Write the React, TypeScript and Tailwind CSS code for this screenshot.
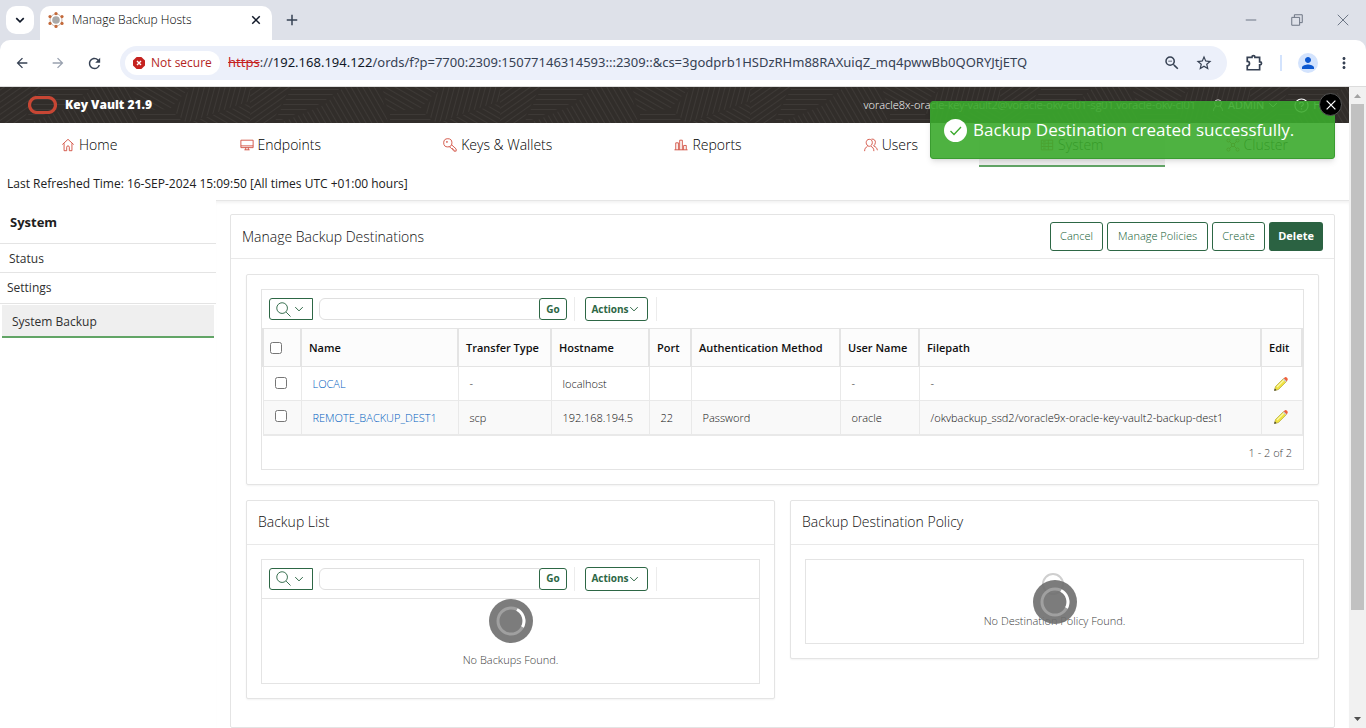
import type { ReactNode } from 'react';
import { MdArrowBack, MdArrowForward, MdRefresh, MdZoomOut, MdStarBorder, MdPerson, MdMoreVert } from 'react-icons/md';

interface Destination {
  name: string;
  type: string;
  host: string;
  port: string;
  auth: string;
  user: string;
  path: string;
}

const DESTINATIONS: Destination[] = [
  { name: 'LOCAL', type: '-', host: 'localhost', port: '', auth: '', user: '-', path: '-' },
  {
    name: 'REMOTE_BACKUP_DEST1',
    type: 'scp',
    host: '192.168.194.5',
    port: '22',
    auth: 'Password',
    user: 'oracle',
    path: '/okvbackup_ssd2/voracle9x-oracle-key-vault2-backup-dest1',
  },
];

const HEADERS = ['Name', 'Transfer Type', 'Hostname', 'Port', 'Authentication Method', 'User Name', 'Filepath', 'Edit'];

function Line({ size = 16, className = '', children }: { size?: number; className?: string; children: ReactNode }) {
  return (
    <svg width={size} height={size} viewBox="0 0 16 16" fill="none" stroke="currentColor" className={`shrink-0 ${className}`} aria-hidden="true">
      {children}
    </svg>
  );
}

const icons = {
  home: <path d="M1.500 7.500 8 1.500l6.500 6M3.500 6v8.500h3v-4a1.500 1.500 0 0 1 3 0v4h3V6" />,
  endpoints: <path d="M1 2.500h14v8.500H1zM1 9h14M6.500 11v2.500M9.500 11v2.500M5 13.500h6" />,
  keys: (
    <>
      <circle cx="5.500" cy="5.500" r="4.700" />
      <circle cx="4.500" cy="4.500" r=".6" />
      <path d="m9.500 7.500 5.500 5v2.500h-2.500v-1.500h-1.500v-1.500h-1.500l-2.500-2.500" />
    </>
  ),
  reports: <path d="M.5 13.500h15M2 13.500v-8h3v8M6.500 13.500v-11h3v11M11 13.500v-5h3v5" />,
  users: (
    <>
      <path d="M6 1.500c-2.200 0-3.500 1.700-3.500 3.700S4 9.500 6 9.500s3.500-2 3.500-4.300S8.200 1.500 6 1.500ZM.7 15c0-3 1.300-4.300 3.300-5.500M8 9.500c2 1 3.300 2.500 3.300 5.500" />
      <path d="M8.500 1.300c3-.5 4.800 1.500 4.500 4-.2 1.700-.9 2.900-2 3.700 2.500 1 4 2.700 4.300 5" />
    </>
  ),
  system: (
    <>
      <path d="M1.500 2.500h13v11h-13zM1.500 6h13M1.500 9.700h13M9.500 2.500v11" />
      <path d="M3.500 4.300h3M3.500 7.900h3M3.500 11.600h3" />
    </>
  ),
  cluster: (
    <>
      <circle cx="8" cy="8" r="2" />
      <circle cx="2.800" cy="2.800" r="1.800" />
      <circle cx="13.200" cy="2.800" r="1.800" />
      <circle cx="2.800" cy="13.200" r="1.800" />
      <circle cx="13.200" cy="13.200" r="1.800" />
      <path d="m4 4 2.600 2.600M12 4 9.400 6.600M4 12l2.600-2.600M12 12 9.400 9.400" />
    </>
  ),
};

const NAV = [
  { label: 'Home', icon: icons.home },
  { label: 'Endpoints', icon: icons.endpoints },
  { label: 'Keys & Wallets', icon: icons.keys },
  { label: 'Reports', icon: icons.reports },
  { label: 'Users', icon: icons.users },
  { label: 'System', icon: icons.system, active: true },
  { label: 'Cluster', icon: icons.cluster },
];

function Chevron() {
  return (
    <Line size={10}>
      <path d="m2 5 6 6 6-6" strokeWidth="1.600" />
    </Line>
  );
}

function Favicon() {
  return (
    <svg width="16" height="16" viewBox="0 0 16 16" className="shrink-0" aria-hidden="true">
      <circle cx="8" cy="8" r="6" fill="none" stroke="#c9b8ae" strokeWidth="1" />
      <circle cx="8" cy="8" r="3.800" fill="#a9a9a9" />
      {[[8, 1.6], [2, 4.6], [14, 4.6], [2, 11.4], [14, 11.4], [8, 14.4]].map(([x, y]) => (
        <circle key={`${x}-${y}`} cx={x} cy={y} r="1.600" fill="#c4693a" />
      ))}
    </svg>
  );
}

function BrowserChrome() {
  return (
    <div className="shrink-0 bg-[#dee1e9]">
      <div className="flex h-10 items-end">
        <button className="mb-[6px] ml-[6px] flex size-7 items-center justify-center rounded-[10px] bg-white text-gray-900" aria-label="Search tabs">
          <Line size={10}><path d="m2 5 6 6 6-6" strokeWidth="2.600" /></Line>
        </button>
        <div className="ml-[6px] flex h-[34px] w-[232px] items-center rounded-t-[10px] bg-white pb-[6px] pl-2">
          <Favicon />
          <span className="ml-2 grow text-xs font-light text-black">Manage Backup Hosts</span>
          <button className="mr-[10px] text-gray-900" aria-label="Close tab">
            <Line size={12}><path d="m3 3 10 10M13 3 3 13" strokeWidth="2" /></Line>
          </button>
        </div>
        <button className="mb-[14px] ml-[14px] text-gray-700" aria-label="New tab">
          <Line size={12}><path d="M8 1v14M1 8h14" strokeWidth="2" /></Line>
        </button>
        <div className="mb-[14px] ml-auto flex items-center gap-[34px] pr-[17px] text-gray-500">
          <button aria-label="Minimize"><Line size={12}><path d="M1 8h14" strokeWidth="1.300" /></Line></button>
          <button aria-label="Restore"><Line size={12}><path d="M1 4.500h10.500V15H1zM4.500 4.500V1H15v10.500h-3.500" strokeWidth="1.300" /></Line></button>
          <button aria-label="Close"><Line size={12}><path d="m1 1 14 14M15 1 1 15" strokeWidth="1.300" /></Line></button>
        </div>
      </div>
      <div className="flex h-[46px] items-center rounded-t-[10px] bg-white pl-[14px] text-gray-700">
        <button aria-label="Back"><MdArrowBack size={16} /></button>
        <button className="ml-5 text-gray-400" aria-label="Forward"><MdArrowForward size={16} /></button>
        <button className="ml-5" aria-label="Reload"><MdRefresh size={17} /></button>
        <div className="ml-[17px] flex h-[34px] grow items-center rounded-full bg-[#ecf0fa] pl-[5px] pr-[14px]">
          <button className="flex h-6 w-[95px] shrink-0 items-center gap-[6px] rounded-full bg-white pl-2 text-xs text-[#b3261e]">
            <svg width="12" height="12" viewBox="0 0 12 12" aria-hidden="true">
              <path d="M3.600 0h4.800L12 3.600v4.800L8.400 12H3.600L0 8.400V3.600z" fill="#c5221f" />
              <path d="m4 4 4 4M8 4 4 8" stroke="#fff" strokeWidth="1.400" />
            </svg>
            Not secure
          </button>
          <span className="ml-2 grow whitespace-nowrap font-['Noto_Sans',sans-serif] text-[13px] text-gray-700">
            <span className="text-[#c5221f] line-through">https</span>://
            <span className="text-gray-900">192.168.194.122</span>
            /ords/f?p=7700:2309:15077146314593:::2309::&amp;cs=3godprb1HSDzRHm88RAXuiqZ_mq4pwwBb0QORYJtjETQ
          </span>
          <button aria-label="Zoom"><MdZoomOut size={18} /></button>
          <button className="ml-[14px]" aria-label="Bookmark"><MdStarBorder size={18} /></button>
        </div>
        <button className="ml-[18px]" aria-label="Extensions">
          <Line size={18}>
            <path d="M2 3h4.200V2.700a1.300 1.300 0 0 1 2.600 0V3H13v4h.4a1.300 1.300 0 0 1 0 2.600H13V14H2v-3.500a2 2 0 0 0 0-4z" strokeWidth="1.500" />
          </Line>
        </button>
        <span className="ml-[17px] h-4 w-[2px] bg-[#d3e3fd]" />
        <button className="ml-4 flex size-5 items-center justify-center rounded-full bg-[#d3e3fd] text-[#0b57d0]" aria-label="Profile">
          <MdPerson size={18} />
        </button>
        <button className="ml-[17px] mr-[13px]" aria-label="Menu"><MdMoreVert size={18} /></button>
      </div>
    </div>
  );
}

// Hatched patches that repeat along the title bar
function Hatching() {
  return (
    <svg className="absolute inset-0 size-full" aria-hidden="true">
      <defs>
        {[0, 30, 60, 105, 145].map(angle => (
          <pattern key={angle} id={`hatch-${angle}`} width="5" height="5" patternUnits="userSpaceOnUse" patternTransform={`rotate(${angle})`}>
            <path d="M0 2.500h5" stroke="#3d3936" strokeWidth="1" />
          </pattern>
        ))}
        <pattern id="patches" width="250" height="36" patternUnits="userSpaceOnUse">
          <path d="M0 0h40l-18 36H0z" fill="url(#hatch-145)" />
          <path d="M42 0h50L72 16 24 36z" fill="url(#hatch-0)" />
          <path d="M94 0h36l8 36H30l44-18z" fill="url(#hatch-60)" />
          <path d="M132 0h58l-20 22-32 2z" fill="url(#hatch-30)" />
          <path d="m140 26 32-2 12 12h-44z" fill="url(#hatch-0)" />
          <path d="M192 0h58v14l-64 22-13-13z" fill="url(#hatch-105)" />
          <path d="M250 16v20h-62z" fill="url(#hatch-30)" />
        </pattern>
      </defs>
      <rect width="100%" height="100%" fill="url(#patches)" />
    </svg>
  );
}

function TitleBar() {
  return (
    <header className="relative h-9 bg-[#312d2a] text-white">
      <Hatching />
      <div className="relative flex h-full items-center pl-7 pr-3">
        <svg width="29" height="18" viewBox="0 0 29 18" aria-hidden="true">
          <rect x="1.500" y="1.500" width="26" height="15" rx="7.500" fill="none" stroke="#c74634" strokeWidth="3.200" />
        </svg>
        <span className="ml-2 text-xs font-extrabold">Key Vault 21.9</span>
        <span className="ml-auto text-[11px] font-light">voracle8x-oracle-key-vault2@voracle-okv-cl01-sg01.voracle-okv-cl01</span>
        <button className="ml-4 flex items-center gap-1 text-[11px]">
          <Line size={12}>
            <circle cx="8" cy="5.500" r="4.500" />
            <path d="M2 16c0-3 1-4.500 3.500-6.500M14 16c0-3-1-4.500-3.500-6.500" />
          </Line>
          ADMIN
          <Chevron />
        </button>
        <button className="ml-4 flex items-center gap-1 text-[11px]">
          <Line size={15}>
            <circle cx="8" cy="8" r="7" strokeWidth="1.200" />
            <path d="M6 6.500a2 2 0 1 1 2.800 1.700c-.6.300-.8.600-.8 1.300M8 11v1.300" strokeWidth="1.200" />
          </Line>
          Help
        </button>
      </div>
    </header>
  );
}

function SearchBar() {
  return (
    <div className="flex h-[38px] items-center pl-[7px]">
      <button className="flex h-[22px] w-11 items-center justify-center gap-[3px] rounded-l-[3px] border border-[#2d6745] pr-[3px] text-[#2d6745]" aria-label="Select columns to search">
        <Line size={15}>
          <circle cx="6.500" cy="6.500" r="5.700" />
          <path d="m10.800 10.800 4.700 4.700" />
        </Line>
        <Chevron />
      </button>
      <input type="text" aria-label="Search" className="ml-[6px] h-[22px] w-[221px] rounded-l-md border border-[#dfdfdf] px-2 text-xs outline-none" />
      <button className="-ml-px h-[22px] w-7 rounded-[3px] border border-[#2d6745] bg-white text-[10px] font-bold text-[#2d6745]">Go</button>
      <span className="ml-[7px] h-6 w-px bg-[#ececec]" />
      <button className="ml-[10px] flex h-6 w-[63px] items-center justify-center rounded-[3px] border border-[#2d6745] pr-[3px] text-[10px] font-bold text-[#2d6745]">
        Actions
        <Chevron />
      </button>
      <span className="ml-2 h-6 w-px bg-[#ececec]" />
    </div>
  );
}

function Pencil() {
  return (
    <svg width="16" height="16" viewBox="0 0 16 16" aria-hidden="true">
      <path d="M1.500 14.500 2.500 10.500 10.500 2.500 13.500 5.500 5.500 13.500z" fill="#efe23f" stroke="#b5a93a" strokeWidth=".7" />
      <path d="m4 11 7.500-7.500" stroke="#fbf7a8" strokeWidth="1.200" />
      <path d="m10.500 2.500 1.500-1.300q1-.5 2 .5t.7 2.200l-1.200 1.600z" fill="#f0603c" />
      <path d="m9.800 3.200 3 3 .9-.9-3-3z" fill="#c9ccd0" />
      <path d="m1.200 14.800 .6-2.300 1.700 1.700z" fill="#333" />
    </svg>
  );
}

function Spinner() {
  return (
    <svg width="44" height="44" viewBox="0 0 44 44" aria-hidden="true">
      <circle cx="22" cy="22" r="22" fill="#6e6e6e" fillOpacity=".9" />
      <circle cx="22" cy="22" r="13" fill="none" stroke="#a0a0a0" strokeWidth="3" />
      <path d="M28 10.500A13 13 0 0 1 33.500 28" fill="none" stroke="#fff" strokeWidth="3" />
    </svg>
  );
}

function NoDataIcon() {
  return (
    <Line size={32} className="text-[#cfcfcf]">
      <circle cx="7" cy="6" r="5" />
      <path d="m10.500 9.500 4 4" />
    </Line>
  );
}

function Panel({ title, children }: { title: string; children: ReactNode }) {
  return (
    <section className="rounded-[2px] border border-[#e4e4e4] bg-white shadow-[0_1px_2px_rgba(0,0,0,0.05)]">
      <h2 className="flex h-11 items-center border-b border-[#e9e9e9] px-[11px] text-sm font-light text-[#101010]">{title}</h2>
      <div className="p-[14px]">{children}</div>
    </section>
  );
}

function DestinationTable() {
  return (
    <table className="w-full table-fixed border-collapse text-left text-[11px] text-[#101010]">
      <colgroup>
        <col className="w-[38px]" />
        <col className="w-[157px]" />
        <col className="w-[93px]" />
        <col className="w-[98px]" />
        <col className="w-[42px]" />
        <col className="w-[149px]" />
        <col className="w-[79px]" />
        <col />
        <col className="w-[41px]" />
      </colgroup>
      <thead>
        <tr className="h-[38px] bg-[#fcfcfc]">
          <th className="border-2 border-y border-[#e4e4e4] pl-[6px]">
            <input type="checkbox" aria-label="Select all" className="block size-3" />
          </th>
          {HEADERS.map(h => (
            <th key={h} className="whitespace-nowrap border-2 border-y border-[#e4e4e4] pl-[7px] pt-[2px] font-semibold">{h}</th>
          ))}
        </tr>
      </thead>
      <tbody className="font-light">
        {DESTINATIONS.map(d => (
          <tr key={d.name} className="h-[34px] last:border-b-2 last:border-[#e9e9e9] even:bg-[#f9f9f9]">
            <td className="border border-[#e9e9e9] pb-[2px] pl-[11px]">
              <input type="checkbox" aria-label={`Select ${d.name}`} className="block size-3" />
            </td>
            <td className="border border-[#e9e9e9] pl-[11px] pt-[2px]"><a href="#" className="text-[#0060c0]">{d.name}</a></td>
            {[d.type, d.host, d.port, d.auth, d.user, d.path].map((value, i) => (
              <td key={i} className="whitespace-nowrap border border-[#e9e9e9] pl-[11px] pt-[2px]">{value}</td>
            ))}
            <td className="border border-[#e9e9e9] pl-[11px]">
              <a href="#" aria-label={`Edit ${d.name}`}><Pencil /></a>
            </td>
          </tr>
        ))}
      </tbody>
    </table>
  );
}

function Toast() {
  return (
    <div role="status" className="absolute right-[14px] top-[14px] flex h-[58px] w-[405px] items-center rounded-[3px] border border-[#3a9c30] bg-[#3baa2c]/90 pl-[13px] text-white shadow-md">
      <svg width="23" height="23" viewBox="0 0 23 23" className="shrink-0" aria-hidden="true">
        <circle cx="11.500" cy="11.500" r="11.500" fill="#fff" />
        <path d="m6.500 12 3.500 3.500 7-7.500" fill="none" stroke="#3baa2c" strokeWidth="1.300" />
      </svg>
      <span className="ml-[6px] whitespace-nowrap text-[17px]">Backup Destination created successfully.</span>
      <button className="absolute -right-2 -top-[9px] flex size-[23px] items-center justify-center rounded-full border border-[#555] bg-black" aria-label="Close notification">
        <Line size={10}><path d="m1 1 14 14M15 1 1 15" strokeWidth="2" /></Line>
      </button>
    </div>
  );
}

function Scrollbar() {
  return (
    <div className="flex w-[17px] shrink-0 flex-col items-center bg-[#f1f1f1]" aria-hidden="true">
      <svg width="17" height="17" viewBox="0 0 17 17" className="shrink-0"><path d="m5 11 3.500-4 3.500 4z" fill="#a3a3a3" /></svg>
      <div className="w-full grow px-[2px]">
        <div className="h-5/6 bg-[#c1c1c1]" />
      </div>
      <svg width="17" height="17" viewBox="0 0 17 17" className="shrink-0"><path d="m5 6 3.500 4L12 6z" fill="#505050" /></svg>
    </div>
  );
}

const OUTLINE_BUTTON = 'h-[29px] rounded-[3px] border border-[#2d6745] text-[11px] font-light text-[#0f5a30]';

export default function App() {
  return (
    <div className="flex h-screen flex-col overflow-hidden bg-white font-['Open_Sans','Noto_Sans',sans-serif]">
      <BrowserChrome />
      <div className="flex min-h-0 grow border-t border-[#dcdcdc]">
        <div className="relative min-w-0 grow overflow-hidden">
          <TitleBar />
          <nav className="flex h-11">
            {NAV.map(item => (
              <a
                key={item.label}
                href="#"
                className={`flex flex-auto items-center justify-center gap-1 border-b-2 pt-[2px] text-sm font-light text-black ${item.active ? 'border-[#62a566] bg-[#efefef]' : 'border-transparent'}`}
              >
                <Line size={14} className="text-[#d0493a]">{item.icon}</Line>
                {item.label}
              </a>
            ))}
          </nav>
          <div className="flex h-[33px] items-center pl-[7px] text-xs text-[#202020]">
            Last Refreshed Time: 16-SEP-2024 15:09:50 [All times UTC +01:00 hours]
          </div>
          <div className="flex">
            <aside className="w-[216px] shrink-0 text-xs text-[#303030]">
              <h2 className="h-11 border-b border-[#e4e4e4] pl-[10px] pt-[14px] text-[13px] font-bold text-[#202020]">System</h2>
              <a href="#" className="flex h-[29px] items-center border-b border-[#e4e4e4] pl-[9px] pt-[2px]">Status</a>
              <a href="#" className="flex h-[31px] items-center border-b border-[#e4e4e4] pl-[7px]">Settings</a>
              <a href="#" className="mx-[2px] mt-px flex h-[33px] items-center border-b-2 border-[#62a566] bg-[#efefef] pl-[10px] pt-[3px]">System Backup</a>
            </aside>
            <main className="min-w-0 grow border-t border-[#e6e6e6] px-[14px] shadow-[inset_0_3px_3px_-1px_rgba(0,0,0,0.05)]">
              <section className="mb-4 mt-[13px] rounded-[2px] border border-[#e4e4e4] bg-white">
                <div className="flex h-11 items-center gap-1 border-b border-[#e9e9e9] px-[11px]">
                  <h1 className="mr-auto text-sm font-light text-[#101010]">Manage Backup Destinations</h1>
                  <button className={`${OUTLINE_BUTTON} w-[53px]`}>Cancel</button>
                  <button className={`${OUTLINE_BUTTON} w-[101px]`}>Manage Policies</button>
                  <button className={`${OUTLINE_BUTTON} w-[53px]`}>Create</button>
                  <button className="h-[29px] w-[54px] rounded-[3px] bg-[#2b6242] text-[11px] font-bold text-white">Delete</button>
                </div>
                <div className="px-[15px] pb-7 pt-[15px]">
                  <section className="rounded-[2px] border border-[#e4e4e4] p-[14px] shadow-[0_1px_2px_rgba(0,0,0,0.05)]">
                    <div className="border border-[#e4e4e4]">
                      <SearchBar />
                      <DestinationTable />
                      <div className="flex h-[33px] items-center justify-end pr-[11px] pt-[2px] text-[11px] font-light text-[#404040]">1 - 2 of 2</div>
                    </div>
                  </section>
                  <div className="mt-[15px] grid grid-cols-2 items-start gap-[15px]">
                    <Panel title="Backup List">
                      <div className="border border-[#e4e4e4]">
                        <SearchBar />
                        <div className="relative flex h-[85px] flex-col items-center border-t border-[#e4e4e4] pt-[53px] text-[11px] font-light text-[#404040]">
                          <div className="absolute left-1/2 top-0 -translate-x-1/2"><Spinner /></div>
                          No Backups Found.
                        </div>
                      </div>
                    </Panel>
                    <Panel title="Backup Destination Policy">
                      <div className="relative flex h-[85px] flex-col items-center border border-[#e4e4e4] pt-3 text-[11px] font-light text-[#404040]">
                        <NoDataIcon />
                        <span className="mt-[9px]">No Destination Policy Found.</span>
                        <div className="absolute left-1/2 top-5 -translate-x-1/2"><Spinner /></div>
                      </div>
                    </Panel>
                  </div>
                </div>
              </section>
            </main>
          </div>
          <Toast />
        </div>
        <Scrollbar />
      </div>
    </div>
  );
}
